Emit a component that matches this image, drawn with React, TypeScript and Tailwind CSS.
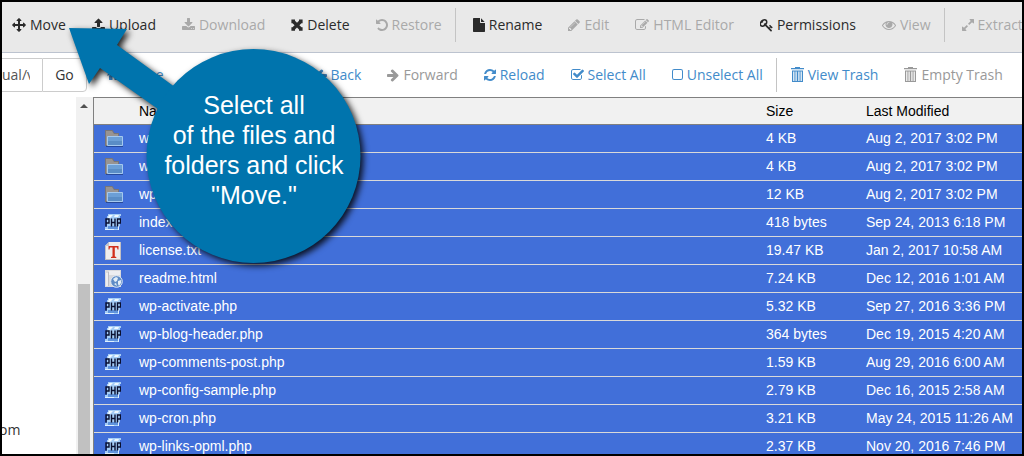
import React from "react";

type Glyph = { box: string; w: string; d: string; flip?: boolean };

const arrowLeft =
  "M1664 896v128q0 53-32.5 90.5t-84.5 37.5h-704l293 294q38 36 38 90t-38 90l-75 76q-37 37-90 37-52 0-91-37l-651-652q-37-37-37-90 0-52 37-91l651-650q38-38 91-38 52 0 90 38l75 74q38 38 38 91t-38 91l-293 293h704q52 0 84.5 37.5t32.5 90.5z";

const glyphs: Record<string, Glyph> = {
  move: {
    box: "0 0 1792 1792",
    w: "w-[14px]",
    d: "M1792 896q0 26-19 45l-256 256q-19 19-45 19t-45-19-19-45v-128h-384v384h128q26 0 45 19t19 45-19 45l-256 256q-19 19-45 19t-45-19l-256-256q-19-19-19-45t19-45 45-19h128v-384h-384v128q0 26-19 45t-45 19-45-19l-256-256q-19-19-19-45t19-45l256-256q19-19 45-19t45 19 19 45v128h384v-384h-128q-26 0-45-19t-19-45 19-45l256-256q19-19 45-19t45 19l256 256q19 19 19 45t-19 45-45 19h-128v384h384v-128q0-26 19-45t45-19 45 19l256 256q19 19 19 45z",
  },
  upload: {
    box: "64 0 1664 1792",
    w: "w-[13px]",
    d: "M1344 1472q0-26-19-45t-45-19-45 19-19 45 19 45 45 19 45-19 19-45zm256 0q0-26-19-45t-45-19-45 19-19 45 19 45 45 19 45-19 19-45zm128-224v320q0 40-28 68t-68 28h-1472q-40 0-68-28t-28-68v-320q0-40 28-68t68-28h427q21 56 70.5 92t110.5 36h256q61 0 110.5-36t70.5-92h427q40 0 68 28t28 68zm-325-648q-17 40-59 40h-256v448q0 26-19 45t-45 19h-256q-26 0-45-19t-19-45v-448h-256q-42 0-59-40-17-39 14-69l448-448q18-19 45-19t45 19l448 448q31 30 14 69z",
  },
  download: {
    box: "64 0 1664 1792",
    w: "w-[13px]",
    d: "M1344 1344q0-26-19-45t-45-19-45 19-19 45 19 45 45 19 45-19 19-45zm256 0q0-26-19-45t-45-19-45 19-19 45 19 45 45 19 45-19 19-45zm128-224v320q0 40-28 68t-68 28h-1472q-40 0-68-28t-28-68v-320q0-40 28-68t68-28h465l135 136q58 56 136 56t136-56l136-136h464q40 0 68 28t28 68zm-325-569q17 41-14 70l-448 448q-18 19-45 19t-45-19l-448-448q-31-29-14-70 17-39 59-39h256v-448q0-26 19-45t45-19h256q26 0 45 19t19 45v448h256q42 0 59 39z",
  },
  remove: {
    box: "0 0 12 14",
    w: "w-[12px]",
    d: "M.4 1.600h3.600v1.100L6 4.800l2-2.100V1.600h3.600V5.200h-1.100L8.400 7.200l2.100 2h1.100v3.500H8v-1.100L6 9.600l-2 2v1.100H.4V9.200h1.100l2.100-2L1.500 5.200H.4z",
  },
  undo: {
    box: "128 0 1536 1792",
    w: "w-[12px]",
    d: "M1664 896q0 156-61 298t-164 245-245 164-298 61q-172 0-327-72.5t-264-204.5q-7-10-6.5-22.5t8.5-20.5l137-138q10-9 25-9 16 2 23 12 73 95 179 147t225 52q104 0 198.5-40.5t163.5-109.5 109.5-163.5 40.5-198.5-40.5-198.5-109.5-163.5-163.5-109.5-198.5-40.5q-98 0-188 35.5t-160 101.5l137 138q31 30 14 69-17 40-59 40h-448q-26 0-45-19t-19-45v-448q0-42 40-59 39-17 69 14l130 129q107-101 244.5-156.5t284.5-55.5q156 0 298 61t245 164 164 245 61 298z",
  },
  file: {
    box: "128 0 1536 1792",
    w: "w-[12px]",
    d: "M1152 512v-472q22 14 36 28l408 408q14 14 28 36h-472zm-128 32q0 40 28 68t68 28h544v1056q0 40-28 68t-68 28h-1344q-40 0-68-28t-28-68v-1600q0-40 28-68t68-28h800v544z",
  },
  pencil: {
    box: "128 0 1536 1792",
    w: "w-[12px]",
    d: "M491 1536l91-91-235-235-91 91v107h128v128h107zm523-928q0-22-22-22-10 0-17 7l-542 542q-7 7-7 17 0 22 22 22 10 0 17-7l542-542q7-7 7-17zm-54-192l416 416-832 832h-416v-416zm683 96q0 53-37 90l-166 166-416-416 166-165q36-38 90-38 53 0 91 38l235 234q37 39 37 91z",
  },
  edit: {
    box: "0 0 1792 1792",
    w: "w-[14px]",
    d: "M888 1184l116-116-152-152-116 116v56h96v96h56zm440-720q-16-16-33 1l-350 350q-17 17-1 33t33-1l350-350q17-17 1-33zm80 594v190q0 119-84.5 203.5t-203.5 84.5h-832q-119 0-203.5-84.5t-84.5-203.5v-832q0-119 84.5-203.5t203.5-84.5h832q63 0 117 25 15 7 18 23 3 17-9 29l-49 49q-14 14-32 8-23-6-45-6h-832q-66 0-113 47t-47 113v832q0 66 47 113t113 47h832q66 0 113-47t47-113v-126q0-13 9-22l64-64q15-15 35-7t20 29zm-96-738l288 288-672 672h-288v-288zm444 132l-92 92-288-288 92-92q28-28 68-28t68 28l152 152q28 28 28 68t-28 68z",
  },
  key: {
    box: "64 0 1664 1792",
    w: "w-[13px]",
    d: "M832 512q0-80-56-136t-136-56-136 56-56 136q0 42 19 83-41-19-83-19-80 0-136 56t-56 136 56 136 136 56 136-56 56-136q0-42-19-83 41 19 83 19 80 0 136-56t56-136zm851 704q0 17-49 66t-66 49q-9 0-28.5-16t-36.5-33-38.5-40-24.5-26l-96 96 220 220q28 28 28 68 0 42-39 81t-81 39q-40 0-68-28l-671-671q-176 131-365 131-163 0-265.5-102.5t-102.5-265.5q0-160 95-313t248-248 313-95q163 0 265.5 102.5t102.5 265.5q0 189-131 365l355 355 96-96q-3-3-26-24.5t-40-38.5-33-36.5-16-28.5q0-17 49-66t66-49q13 0 23 10 6 6 46 44.5t82 79.5 86.5 86 73 78 28.5 41z",
  },
  eye: {
    box: "0 0 1792 1792",
    w: "w-[14px]",
    d: "M1664 960q-152-236-381-353 61 104 61 225 0 185-131.5 316.5t-316.5 131.5-316.5-131.5-131.5-316.5q0-121 61-225-229 117-381 353 133 205 333.5 326.5t434.5 121.5 434.5-121.5 333.5-326.5zm-720-384q0-20-14-34t-34-14q-125 0-214.5 89.5t-89.5 214.5q0 20 14 34t34 14 34-14 14-34q0-86 61-147t147-61q20 0 34-14t14-34zm848 384q0 34-20 69-140 230-376.5 368.5t-499.5 138.5-499.5-139-376.5-368q-20-35-20-69t20-69q140-229 376.5-368t499.5-139 499.5 139 376.5 368q20 35 20 69z",
  },
  expand: {
    box: "128 0 1536 1792",
    w: "w-[12px]",
    d: "M883 1056q0 13-10 23l-332 332 144 144q19 19 19 45t-19 45-45 19h-448q-26 0-45-19t-19-45v-448q0-26 19-45t45-19 45 19l144 144 332-332q10-10 23-10t23 10l114 114q10 10 10 23zm781-864v448q0 26-19 45t-45 19-45-19l-144-144-332 332q-10 10-23 10t-23-10l-114-114q-10-10-10-23t10-23l332-332-144-144q-19-19-19-45t19-45 45-19h448q26 0 45 19t19 45z",
  },
  home: {
    box: "64 0 1664 1792",
    w: "w-[13px]",
    d: "M1472 992v480q0 26-19 45t-45 19h-384v-384h-256v384h-384q-26 0-45-19t-19-45v-480q0-1 .5-3t.5-3l575-474 575 474q1 2 1 6zm223-69l-62 74q-8 9-21 11h-3q-13 0-21-7l-692-577-692 577q-12 8-24 7-13-2-21-11l-62-74q-8-10-7-23.5t11-21.5l719-599q32-26 76-26t76 26l244 204v-195q0-14 9-23t23-9h192q14 0 23 9t9 23v408l219 182q10 8 11 21.5t-7 23.5z",
  },
  up: {
    box: "0 0 8 14",
    w: "w-[8px]",
    d: "M5 .8 8 4.8H6V12.5H.6l1.6-2H4V4.8H2z",
  },
  back: { box: "128 0 1536 1792", w: "w-[12px]", d: arrowLeft },
  forward: { box: "128 0 1536 1792", w: "w-[12px]", d: arrowLeft, flip: true },
  reload: {
    box: "128 0 1536 1792",
    w: "w-[12px]",
    d: "M1639 1056q0 5-1 7-64 268-268 434.5t-478 166.5q-146 0-282.5-55t-243.5-157l-129 129q-19 19-45 19t-45-19-19-45v-448q0-26 19-45t45-19h448q26 0 45 19t19 45-19 45l-137 137q71 66 161 102t187 36q134 0 250-65t186-179q11-17 53-117 8-23 30-23h192q13 0 22.5 9.5t9.5 22.5zm25-800v448q0 26-19 45t-45 19h-448q-26 0-45-19t-19-45 19-45l138-138q-148-137-349-137-134 0-250 65t-186 179q-11 17-53 117-8 23-30 23h-199q-13 0-22.5-9.5t-9.5-22.5v-7q65-268 270-434.5t480-166.5q146 0 284 55.5t245 156.5l130-129q19-19 45-19t45 19 19 45z",
  },
  check: {
    box: "64 0 1664 1792",
    w: "w-[13px]",
    d: "M1472 930v318q0 119-84.5 203.5t-203.5 84.5h-832q-119 0-203.5-84.5t-84.5-203.5v-832q0-119 84.5-203.5t203.5-84.5h832q63 0 117 25 15 7 18 23 3 17-9 29l-49 49q-10 10-23 10-3 0-9-2-23-6-45-6h-832q-66 0-113 47t-47 113v832q0 66 47 113t113 47h832q66 0 113-47t47-113v-254q0-13 9-22l64-64q10-10 23-10 6 0 12 3 20 8 20 29zm231-489l-814 814q-24 24-57 24t-57-24l-430-430q-24-24-24-57t24-57l110-110q24-24 57-24t57 24l263 263 647-647q24-24 57-24t57 24l110 110q24 24 24 57t-24 57z",
  },
  square: {
    box: "0 0 11 14",
    w: "w-[11px]",
    d: "M2.2 1h6.6A2.2 2.2 0 0 1 11 3.2v6.6A2.2 2.2 0 0 1 8.8 12H2.2A2.2 2.2 0 0 1 0 9.8V3.2A2.2 2.2 0 0 1 2.2 1zM2.2 2A1.2 1.2 0 0 0 1 3.2v6.6A1.2 1.2 0 0 0 2.2 11h6.6A1.2 1.2 0 0 0 10 9.8V3.2A1.2 1.2 0 0 0 8.8 2z",
  },
  trash: {
    box: "0 0 13 16",
    w: "w-[13px]",
    d: "M4 1V0h5V1h4v1.200H0V1zM1 3.500h11V15H1zM2.200 4.500V14h1.200V4.500zM4.500 4.500V14h1.200V4.500zM7.300 4.500V14h1.200V4.500zM9.600 4.500V14h1.200V4.500z",
  },
};

function Glyph({ name }: { name: string }) {
  const g = glyphs[name];
  return (
    <svg
      aria-hidden="true"
      viewBox={g.box}
      className={`${g.w} ${name === "trash" ? "h-4" : "h-3.5"} ${g.flip ? "-scale-x-100" : ""} shrink-0 fill-current`}
      fillRule="evenodd"
    >
      <path d={g.d} fillRule="evenodd" />
    </svg>
  );
}

type Action = { icon: string; label: string; off?: boolean; divider?: boolean };

const fileActions: Action[] = [
  { icon: "move", label: "Move" },
  { icon: "upload", label: "Upload" },
  { icon: "download", label: "Download", off: true },
  { icon: "remove", label: "Delete" },
  { icon: "undo", label: "Restore", off: true },
  { icon: "file", label: "Rename", divider: true },
  { icon: "pencil", label: "Edit", off: true },
  { icon: "edit", label: "HTML Editor", off: true },
  { icon: "key", label: "Permissions" },
  { icon: "eye", label: "View", off: true },
  { icon: "expand", label: "Extract", off: true, divider: true },
];

const navActions: Action[] = [
  { icon: "home", label: "Home" },
  { icon: "up", label: "Up One Level" },
  { icon: "back", label: "Back" },
  { icon: "forward", label: "Forward", off: true },
  { icon: "reload", label: "Reload" },
  { icon: "check", label: "Select All" },
  { icon: "square", label: "Unselect All" },
  { icon: "trash", label: "View Trash", divider: true },
  { icon: "trash", label: "Empty Trash", off: true },
];

function Actions({ items, on, off, gap }: { items: Action[]; on: string; off: string; gap: string }) {
  return (
    <>
      {items.map((a) => (
        <React.Fragment key={a.label}>
          {a.divider && <span className={`h-[34px] w-px shrink-0 bg-[#c4c4c4] ${gap}`} />}
          <button
            type="button"
            disabled={a.off}
            className={`flex h-[34px] shrink-0 items-center gap-1 px-[13px] whitespace-nowrap ${a.off ? off : on}`}
          >
            <Glyph name={a.icon} />
            {a.label}
          </button>
        </React.Fragment>
      ))}
    </>
  );
}

function FolderIcon() {
  return (
    <svg aria-hidden="true" viewBox="0 0 18 17" className="h-[17px] w-[18px]">
      <path d="M0 16V0h7.500l2 3H14v13z" fill="#77757a" />
      <path d="M1 15V1h6l2 3h4v11z" fill="#989492" />
      <path d="M2.500 6.500h15v9h-15z" fill="#6c9fd6" stroke="#a5c9ee" />
      <path d="M3 11h14v4H3z" fill="#5a8dc6" />
      <path d="M1 16.500h17" stroke="#27499a" />
    </svg>
  );
}

function PhpIcon() {
  return (
    <svg aria-hidden="true" viewBox="0 0 16 17" className="h-[17px] w-4">
      <path d="M3 0h13v2h-1v10l-1 1v3H0v-3h2V2h1z" fill="#a5cdf6" />
      <path d="M4 1h4L5 4H3zM10 1h4l-1 2H9z" fill="#eef8ff" />
      <path d="M3 12h11v3H3z" fill="#5f93dc" />
      <path d="M0 15.500h9M13.500 12v4" stroke="#dff0ff" />
      <path
        d="M1 12.500V5H4V9H1M6.500 4.500v8M10 4.500v8M6.500 8.500H10M12.500 12.500V5h3V9h-3"
        fill="none"
        stroke="#0a1030"
        strokeWidth="1.400"
      />
    </svg>
  );
}

function TextIcon() {
  return (
    <svg aria-hidden="true" viewBox="0 0 16 18" className="h-[18px] w-4">
      <path d="M4 0h12v18H0V4z" fill="#efeded" />
      <path d="M0 4h4V0z" fill="#c5c3c8" />
      <path d="M0 17.500h16M15.500 0v18M.5 4v14" stroke="#c2c0c4" />
      <path d="M3.500 4h10v3.500h-1L12 5.500H9.800v9l1.500.5v1H6v-1l1.500-.5v-9H5l-.5 2h-1z" fill="#d22f1c" />
    </svg>
  );
}

function HtmlIcon() {
  return (
    <svg aria-hidden="true" viewBox="0 0 18 18" className="h-[18px] w-[18px]">
      <path d="M0 0h16v17H0z" fill="#d9d9dc" />
      <path d="M1 3h2v13H1zM4 1h11v4H4z" fill="#ededf0" />
      <path d="M3.500 2v14" stroke="#bdbdc4" />
      <circle cx="11.500" cy="11.500" r="5.800" fill="#5f8cc6" stroke="#dfe9f6" />
      <path d="M8 9l3-2 2 1-1 3-2 1zM13 11l3-1v3l-2 3-1-2zM9 14l2-1 1 3z" fill="#e3eef8" />
    </svg>
  );
}

const icons = { folder: FolderIcon, php: PhpIcon, text: TextIcon, html: HtmlIcon };

type Row = [keyof typeof icons, string, string, string];

const rows: Row[] = [
  ["folder", "wp-admin", "4 KB", "Aug 2, 2017 3:02 PM"],
  ["folder", "wp-content", "4 KB", "Aug 2, 2017 3:02 PM"],
  ["folder", "wp-includes", "12 KB", "Aug 2, 2017 3:02 PM"],
  ["php", "index.php", "418 bytes", "Sep 24, 2013 6:18 PM"],
  ["text", "license.txt", "19.47 KB", "Jan 2, 2017 10:58 AM"],
  ["html", "readme.html", "7.24 KB", "Dec 12, 2016 1:01 AM"],
  ["php", "wp-activate.php", "5.32 KB", "Sep 27, 2016 3:36 PM"],
  ["php", "wp-blog-header.php", "364 bytes", "Dec 19, 2015 4:20 AM"],
  ["php", "wp-comments-post.php", "1.59 KB", "Aug 29, 2016 6:00 AM"],
  ["php", "wp-config-sample.php", "2.79 KB", "Dec 16, 2015 2:58 AM"],
  ["php", "wp-cron.php", "3.21 KB", "May 24, 2015 11:26 AM"],
  ["php", "wp-links-opml.php", "2.37 KB", "Nov 20, 2016 7:46 PM"],
];

function FileTable() {
  const head = "h-[27px] border-b border-[#808080] bg-[#f1f1f1] p-0 text-left font-normal text-black";
  const cell = "h-7 border-b border-[#d9d9d9] bg-[#416fd9] p-0 pb-0.5 text-white whitespace-nowrap";
  return (
    <table className="w-full table-fixed border-separate border-spacing-0 font-['Liberation_Sans',Arial,sans-serif] text-sm">
      <colgroup>
        <col className="w-[45px]" />
        <col />
        <col className="w-[100px]" />
        <col className="w-[156px]" />
      </colgroup>
      <thead>
        <tr>
          <th className={head} aria-label="Type" />
          <th className={head}>Name</th>
          <th className={head}>Size</th>
          <th className={head}>Last Modified</th>
        </tr>
      </thead>
      <tbody>
        {rows.map(([kind, name, size, date]) => {
          const Icon = icons[kind];
          return (
            <tr key={name}>
              <td className="h-7 border-b border-[#d9d9d9] bg-[#416fd9] p-0">
                <div className="flex pl-[11px]">
                  <Icon />
                </div>
              </td>
              <td className={cell}>{name}</td>
              <td className={cell}>{size}</td>
              <td className={cell}>{date}</td>
            </tr>
          );
        })}
      </tbody>
    </table>
  );
}

function Callout() {
  return (
    <div className="pointer-events-none absolute top-[26px] left-[67px] h-[236px] w-[294px]">
      <svg
        aria-hidden="true"
        viewBox="0 0 294 236"
        className="absolute inset-0 h-full w-full overflow-visible fill-[#0074ad] drop-shadow-[3px_3px_3px_rgba(0,0,0,0.85)]"
      >
        <path d="M0 0L58 1L48 17L110 62L96 86L31 40L20 56Z" />
        <circle cx="184.500" cy="128" r="107" />
      </svg>
      <p className="absolute top-[62px] left-[77px] w-[216px] text-center font-['Liberation_Sans',Arial,sans-serif] text-[25px] leading-[30px] text-white">
        Select all
        <br />
        of the files and
        <br />
        folders and click
        <br />
        "Move."
      </p>
    </div>
  );
}

export default function App() {
  return (
    <main className="relative flex h-screen w-full flex-col overflow-hidden border-2 border-black bg-white font-['Open_Sans',sans-serif] text-sm text-[#333]">
      <div className="shrink-0 overflow-hidden border-b border-[#bcc3cf] bg-[#e9e9e9] pt-1.5 pb-2.5">
        <div className="-ml-[3px] flex">
          <Actions items={fileActions} on="text-[#2b2b2b]" off="text-[#a9a9a9]" gap="mr-1" />
        </div>
      </div>
      <div className="flex shrink-0 items-center overflow-hidden py-[5px]">
        <form className="flex h-[34px] shrink-0" onSubmit={(e) => e.preventDefault()}>
          <input
            aria-label="Path"
            defaultValue="ual/v"
            className="w-10 border-y border-[#ccc] bg-white pr-3 text-[#555]"
          />
          <button type="submit" className="w-[45px] rounded-r border border-[#ccc] bg-white">
            Go
          </button>
        </form>
        <div className="ml-[7px] flex">
          <Actions items={navActions} on="text-[#428bca]" off="text-[#999]" gap="mr-px" />
        </div>
      </div>
      <div className="flex min-h-0 flex-1">
        <aside className="flex w-[91px] shrink-0">
          <div className="flex flex-1 flex-col justify-end overflow-hidden pb-3.5">
            <span className="-ml-[3px]">om</span>
          </div>
          <div className="flex w-[17px] flex-col bg-[#f1f1f1]">
            <svg aria-hidden="true" viewBox="0 0 17 17" className="h-[17px] w-[17px]">
              <path d="M4 11h8L8 7z" fill="#505050" />
            </svg>
            <div className="mr-[3px] ml-0.5 mt-[170px] flex-1 bg-[#c1c1c1]" />
          </div>
        </aside>
        <section className="min-w-0 flex-1 border-t border-l border-[#808080]">
          <FileTable />
        </section>
      </div>
      <Callout />
    </main>
  );
}
